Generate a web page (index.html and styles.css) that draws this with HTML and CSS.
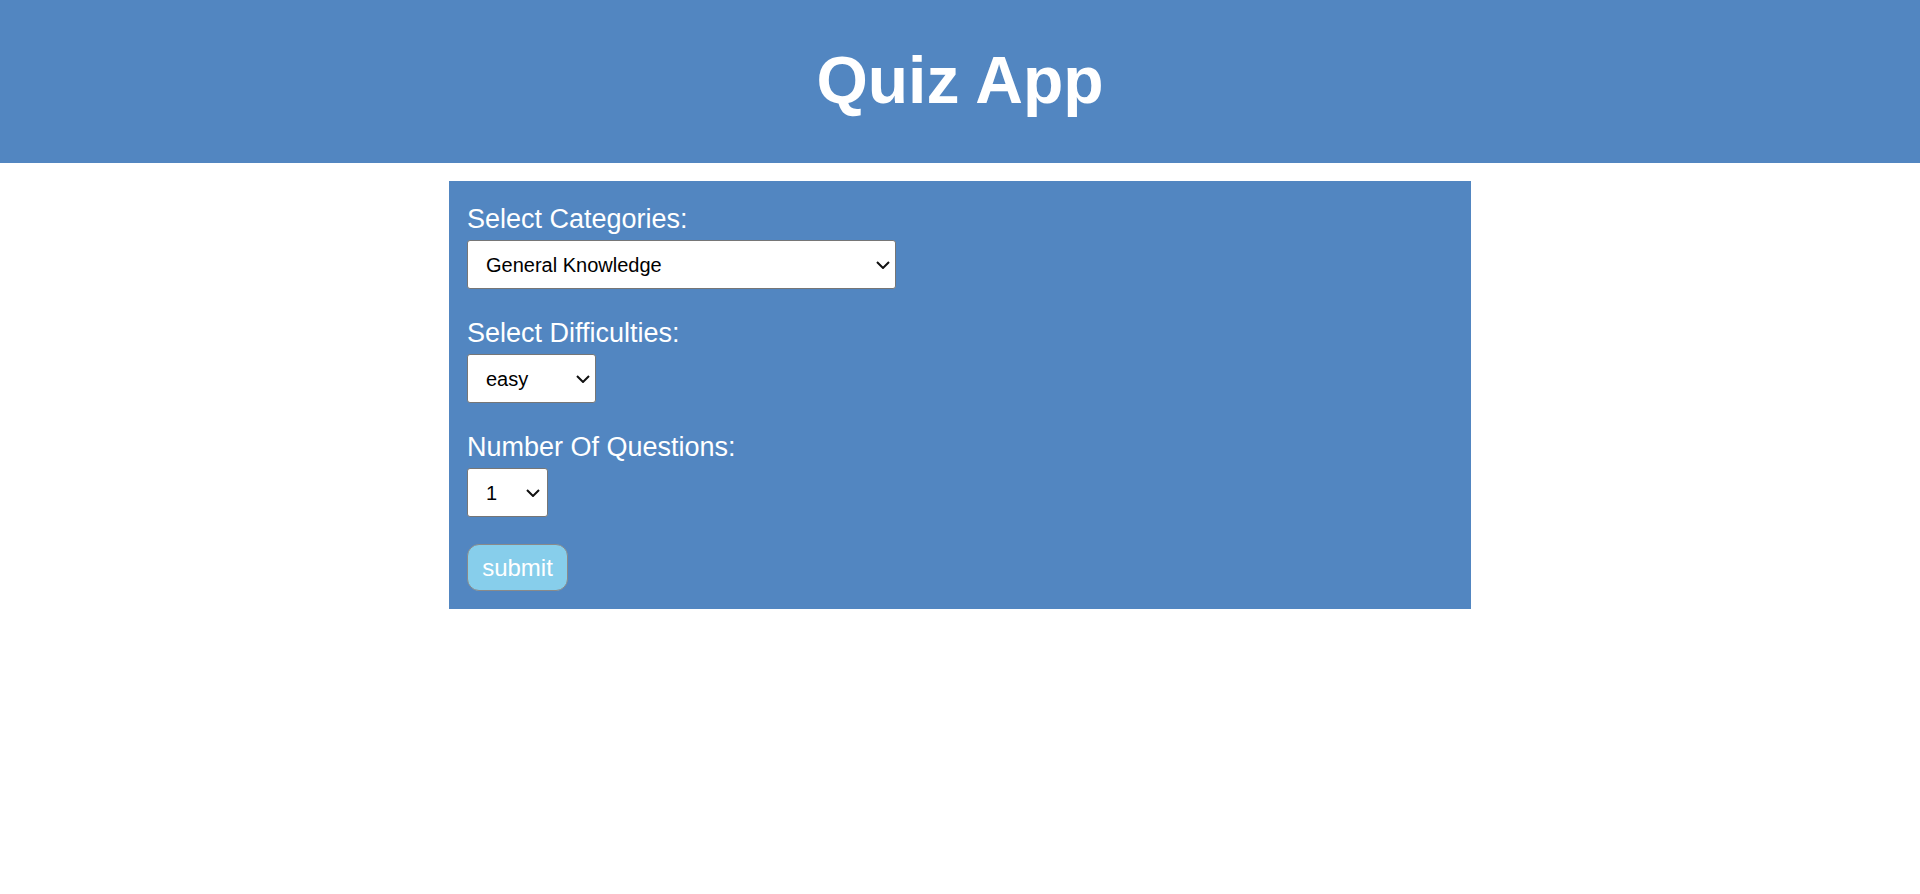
FILE: index.html
```html
<!DOCTYPE html>
<html lang="en">
<head>
<meta charset="utf-8">
<title>Quiz App</title>
<link rel="stylesheet" href="styles.css">
</head>
<body>
<header class="header">
  <h1 class="title">Quiz App</h1>
</header>
<main class="panel">
  <form class="quiz-form">
    <div class="field">
      <label class="label" for="cat">Select Categories:</label>
      <span class="select-wrap">
        <select class="select select-cat" id="cat">
          <option>General Knowledge</option>
        </select>
        <svg class="chevron" width="14" height="8" viewBox="0 0 14 8"><path d="M1 1 L7 7 L13 1" fill="none" stroke="#111" stroke-width="2"/></svg>
      </span>
    </div>
    <div class="field">
      <label class="label" for="diff">Select Difficulties:</label>
      <span class="select-wrap">
        <select class="select select-diff" id="diff">
          <option>easy</option>
        </select>
        <svg class="chevron" width="14" height="8" viewBox="0 0 14 8"><path d="M1 1 L7 7 L13 1" fill="none" stroke="#111" stroke-width="2"/></svg>
      </span>
    </div>
    <div class="field">
      <label class="label" for="num">Number Of Questions:</label>
      <span class="select-wrap">
        <select class="select select-num" id="num">
          <option>1</option>
        </select>
        <svg class="chevron" width="14" height="8" viewBox="0 0 14 8"><path d="M1 1 L7 7 L13 1" fill="none" stroke="#111" stroke-width="2"/></svg>
      </span>
    </div>
    <button type="button" class="submit">submit</button>
  </form>
</main>
</body>
</html>
```
FILE: styles.css
```css
html, body {
  margin: 0;
  padding: 0;
  background: #ffffff;
  font-family: "Liberation Sans", Arial, sans-serif;
}

.header {
  height: 163px;
  box-sizing: border-box;
  padding-top: 42px;
  background: #5286c1;
}

.title {
  margin: 0;
  text-align: center;
  color: #ffffff;
  font-size: 66px;
  font-weight: bold;
  line-height: 76px;
}

.panel {
  width: 1022px;
  margin: 18px auto 0;
  box-sizing: border-box;
  padding: 23px 18px 18px 18px;
  background: #5286c1;
}

.quiz-form {
  display: flex;
  flex-direction: column;
  align-items: flex-start;
}

.field {
  display: flex;
  flex-direction: column;
  align-items: flex-start;
  margin-bottom: 29px;
}

.label {
  color: #ffffff;
  font-size: 27px;
  line-height: 31px;
  margin-bottom: 5px;
}

.select-wrap {
  position: relative;
  display: inline-block;
  line-height: 0;
}

.select {
  -webkit-appearance: none;
  appearance: none;
  height: 49px;
  box-sizing: border-box;
  border: 1px solid #767676;
  border-radius: 3px;
  background: #ffffff;
  color: #000000;
  font-family: "Liberation Sans", Arial, sans-serif;
  font-size: 20px;
  padding: 0 12px 0 18px;
  margin: 0;
}

.chevron {
  position: absolute;
  right: 6px;
  top: 21px;
  pointer-events: none;
}

.select-cat { width: 429px; }
.select-diff { width: 129px; }
.select-num { width: 81px; }
.select-num + .chevron { right: 8px; }

.submit {
  width: 101px;
  height: 47px;
  box-sizing: border-box;
  margin-top: -2px;
  border: 1px solid #8a8a8a;
  border-radius: 12px;
  background: #87ceeb;
  color: #ffffff;
  font-family: "Liberation Sans", Arial, sans-serif;
  font-size: 24px;
  padding: 0;
}
```
